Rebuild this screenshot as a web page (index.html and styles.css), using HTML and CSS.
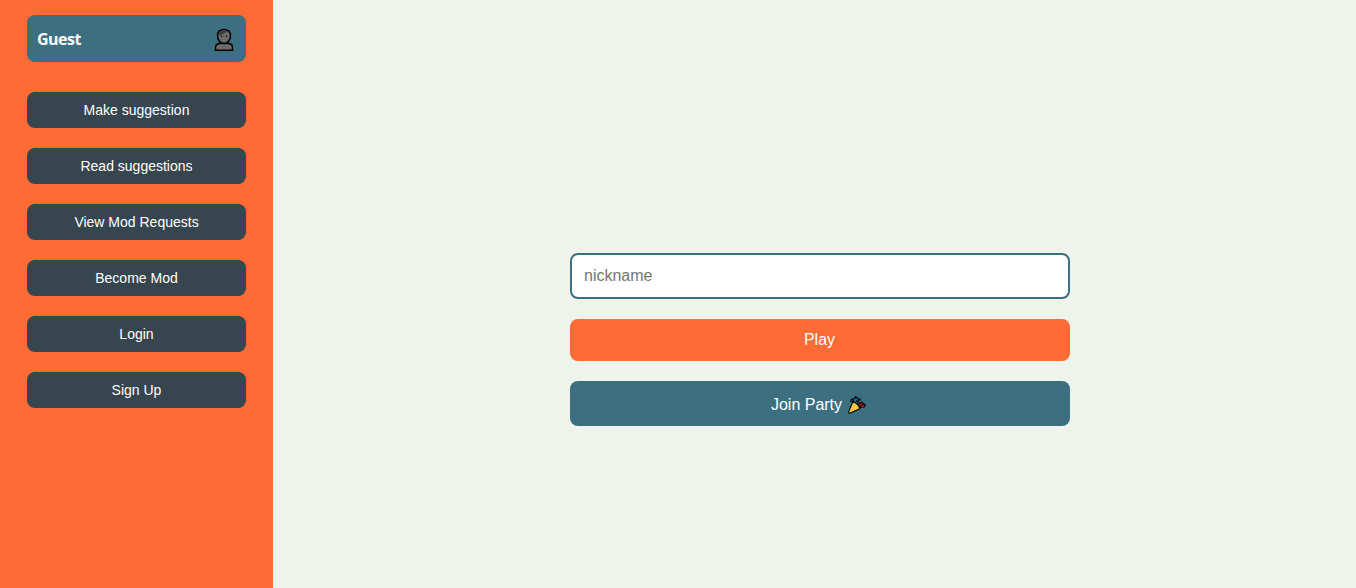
FILE: index.html
```html
<!DOCTYPE html>
<html lang="en">
<head>
<meta charset="utf-8">
<title>Play</title>
<link rel="stylesheet" href="styles.css">
</head>
<body>
<aside class="sidebar">
  <div class="profile">
    <span class="profile-name">Guest</span>
    <svg class="avatar" viewBox="0 0 20 24" aria-hidden="true">
      <path class="skin" d="M1.500 22.300v-2.500c0-2.800 1.700-4.300 4.500-4.300h8c2.800 0 4.500 1.500 4.500 4.300v2.500z"/>
      <path class="skin" d="M3.500 7.800C3.500 3.700 6.200 1.600 10 1.600s6.500 2.100 6.500 6.200c0 4.300-2.900 7.500-6.500 7.500S3.500 12.100 3.500 7.800z"/>
      <path class="hair" d="M4.300 8.200C4.200 4.200 6.500 2.400 10.300 2.400c1.800 0 3.400.6 4.300 1.800-2.800-.2-3.800.4-5.200 1.600C8.100 6.800 6 6.800 4.300 8.200z"/>
      <circle cx="7.500" cy="8.300" r=".8"/><circle cx="12.500" cy="8.300" r=".8"/>
    </svg>
  </div>
  <nav class="menu">
    <button class="menu-button">Make suggestion</button>
    <button class="menu-button">Read suggestions</button>
    <button class="menu-button">View Mod Requests</button>
    <button class="menu-button">Become Mod</button>
    <button class="menu-button">Login</button>
    <button class="menu-button">Sign Up</button>
  </nav>
</aside>
<main class="content">
  <form class="join-form">
    <input class="nickname" type="text" placeholder="nickname">
    <button class="action play" type="button">Play</button>
    <button class="action party" type="button">Join Party
      <svg class="popper" viewBox="0 0 20 20" aria-hidden="true">
        <path class="blue" d="M6.500 6.500 5.500 4 8 3.500 8.500 1.500 11 3.500 11.500 6 10 9.500z"/>
        <path class="red" d="M11 10.500 12.500 8l2.500-.8 1.200 1.600 2.300 1-1.300 2.200-3.700.2z"/>
        <path class="cone" d="M5.800 7 1.700 16.500c-.5 1.200.2 1.900 1.400 1.500l9.700-4.300C12 10.500 9.500 7.800 5.800 7z"/>
        <path class="purple" d="M3.500 4.500h2v2h-2zM12 3.800h1.500v1.500H12z"/>
        <path class="streak" d="m9 7 1.500-2M13 10.300l3.500-.5"/>
      </svg>
    </button>
  </form>
</main>
</body>
</html>
```
FILE: styles.css
```css
* {
  box-sizing: border-box;
}

body {
  display: flex;
  min-height: 100vh;
  margin: 0;
  background: #eef3ec;
  font-family: "Liberation Sans", Arial, sans-serif;
}

.sidebar {
  flex: 0 0 273px;
  padding: 15px 27px;
  background: #ff6b35;
}

.profile {
  display: flex;
  align-items: center;
  justify-content: space-between;
  height: 47px;
  padding: 3px 12px 0 10px;
  border-radius: 8px;
  background: #3c7080;
  color: #fff;
}

.profile-name {
  padding-bottom: 3px;
  font: bold 16px/20px "Open Sans", sans-serif;
  letter-spacing: -.5px;
}

.avatar {
  width: 20px;
  height: 24px;
  stroke: #000;
  stroke-width: 1.5;
}

.avatar circle {
  stroke: none;
}

.skin {
  fill: #6c6c6c;
}

.hair {
  fill: #3d3d3d;
  stroke: none;
}

.menu {
  display: flex;
  flex-direction: column;
  gap: 20px;
  margin-top: 30px;
}

.menu-button,
.action {
  padding: 0;
  border: 0;
  border-radius: 8px;
  color: #fff;
  font-family: inherit;
}

.menu-button {
  height: 36px;
  background: #37454f;
  font-size: 14px;
}

.content {
  flex: 1;
  display: flex;
  justify-content: center;
  padding: 253px 0 0 11px;
}

.join-form {
  display: flex;
  flex-direction: column;
  gap: 20px;
  width: 500px;
}

.nickname {
  height: 46px;
  padding: 0 12px;
  border: 2px solid #3c7080;
  border-radius: 8px;
  background: #fff;
  font: 16px "Liberation Sans", Arial, sans-serif;
}

.nickname::placeholder {
  color: #757575;
}

.action {
  font-size: 16px;
}

.play {
  height: 42px;
  padding-right: 1px;
  background: #ff6b35;
}

.party {
  display: flex;
  align-items: center;
  justify-content: center;
  gap: 5px;
  height: 45px;
  padding: 2px 2px 0 0;
  background: #3c7080;
}

.popper {
  width: 20px;
  height: 20px;
  stroke: #000;
  stroke-width: 1.1;
  stroke-linejoin: round;
}

.cone {
  fill: #fcc63f;
}

.blue {
  fill: #16749b;
}

.red {
  fill: #bd2830;
}

.purple {
  fill: #6b3b9c;
  stroke-width: .7;
}

.streak {
  fill: none;
}
```
